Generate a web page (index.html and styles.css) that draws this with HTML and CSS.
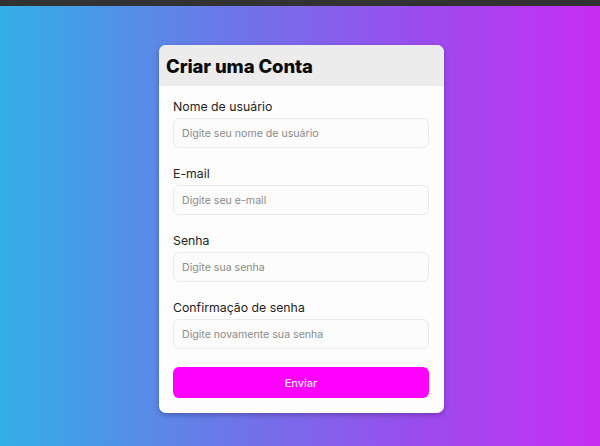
FILE: index.html
```html
<!DOCTYPE html>
<html lang="pt-BR">
<head>
<meta charset="utf-8">
<title>Criar uma Conta</title>
<link rel="stylesheet" href="styles.css">
</head>
<body>
<div class="topbar"></div>
<main class="stage">
  <form class="card">
    <div class="card-header">
      <h1 class="title">Criar uma Conta</h1>
    </div>
    <div class="card-body">
      <div class="field">
        <label class="label" for="user">Nome de usuário</label>
        <input class="input" id="user" type="text" placeholder="Digite seu nome de usuário">
      </div>
      <div class="field">
        <label class="label" for="email">E-mail</label>
        <input class="input" id="email" type="email" placeholder="Digite seu e-mail">
      </div>
      <div class="field">
        <label class="label" for="pass">Senha</label>
        <input class="input" id="pass" type="password" placeholder="Digite sua senha">
      </div>
      <div class="field">
        <label class="label" for="pass2">Confirmação de senha</label>
        <input class="input" id="pass2" type="password" placeholder="Digite novamente sua senha">
      </div>
      <button class="submit" type="button">Enviar</button>
    </div>
  </form>
</main>
</body>
</html>
```
FILE: styles.css
```css
html, body {
  margin: 0;
  padding: 0;
  height: 100%;
}
body {
  font-family: "Inter", "Noto Sans", sans-serif;
  background: linear-gradient(to right, #33afe6 0%, #6f74e8 40%, #9b4cee 70%, #c72ef2 100%);
  display: flex;
  flex-direction: column;
  overflow: hidden;
}
.topbar {
  height: 6px;
  background: #323232;
  flex: none;
}
.stage {
  flex: 1;
  display: flex;
  justify-content: center;
  align-items: flex-start;
  padding-top: 39px;
  padding-left: 3px;
}
.card {
  width: 285px;
  background: #fdfdfd;
  border-radius: 7px;
  overflow: hidden;
  box-shadow: 0 2px 5px rgba(40, 20, 80, 0.35);
}
.card-header {
  height: 41px;
  background: #ececec;
  display: flex;
  align-items: center;
  padding-left: 7px;
}
.title {
  margin: 0;
  font-size: 18.5px;
  font-weight: 800;
  color: #0a0a0a;
  letter-spacing: -0.1px;
}
.card-body {
  padding: 11px 15px 15px 14px;
  display: flex;
  flex-direction: column;
}
.field + .field {
  margin-top: 16px;
}
.label {
  display: block;
  font-size: 12.3px;
  line-height: 20px;
  color: #1e1e1e;
  margin-bottom: 1px;
}
.input {
  display: block;
  box-sizing: border-box;
  width: 100%;
  height: 30px;
  margin: 0;
  padding: 0 8px;
  border: 1px solid #e9e9e9;
  border-radius: 6px;
  background: #fcfcfc;
  font-family: inherit;
  font-size: 10.6px;
  color: #333;
  outline: none;
}
.input::placeholder {
  color: #8a8a8a;
}
.submit {
  margin-top: 18px;
  height: 31px;
  border: none;
  border-radius: 6px;
  background: #ff00ff;
  color: #fde6fd;
  font-family: inherit;
  font-size: 11px;
  font-weight: 500;
  cursor: pointer;
}
```
